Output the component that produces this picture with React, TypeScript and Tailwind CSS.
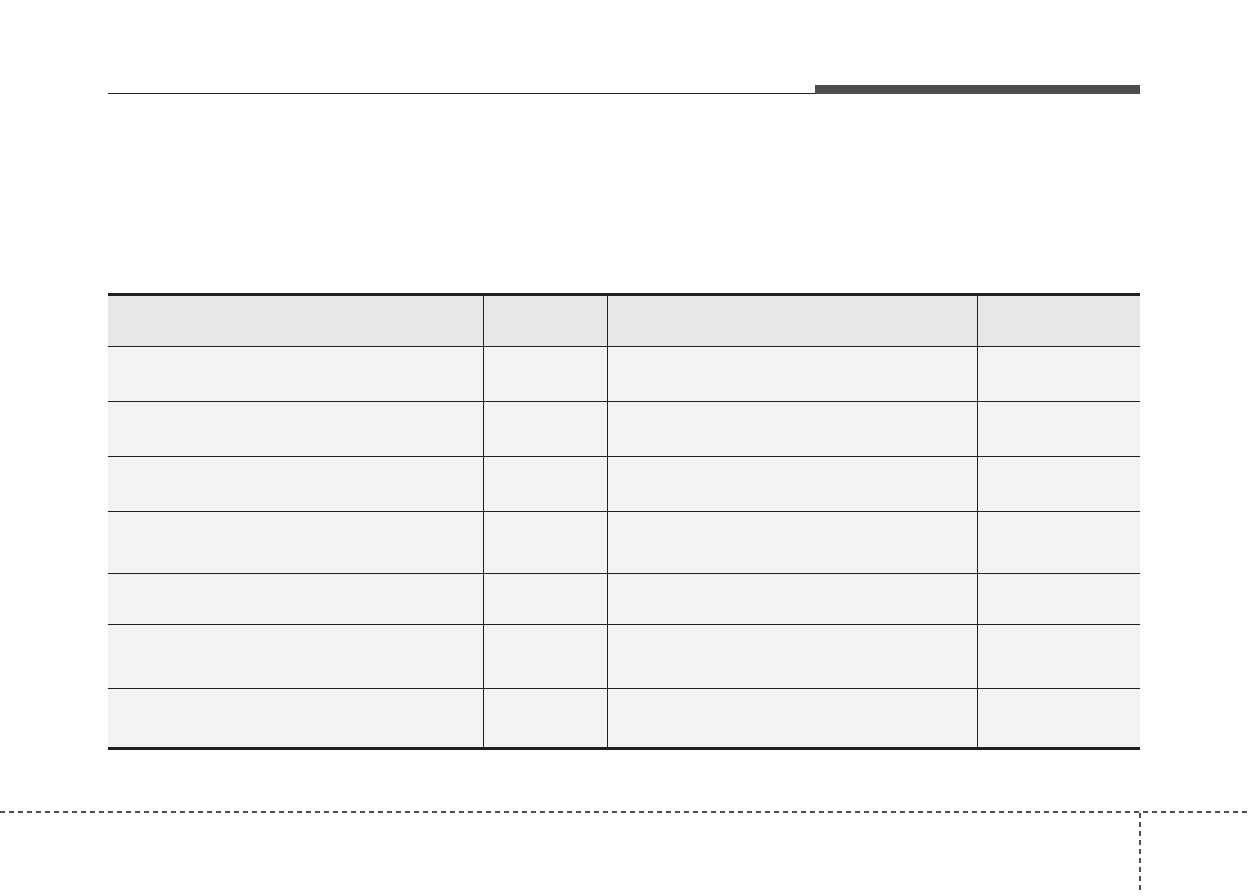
import React from "react"

// Row heights (content only, border counted separately)
const rows = [54, 54, 54, 61, 50, 63, 58]

const cols = "grid grid-cols-[376px_124px_370px_162px]"

function Row({ height, header, last }: { height: number; header?: boolean; last?: boolean }) {
  const bg = header ? "bg-[#e7e7e7]" : "bg-[#f3f3f3]"
  return (
    <div
      className={`${cols} ${bg} ${last ? "" : "border-b border-[#231f20]"}`}
      style={{ height: last ? height : height + 1 }}
    >
      <div className="border-r border-[#231f20]" />
      <div className="border-r border-[#231f20]" />
      <div className="border-r border-[#231f20]" />
      <div />
    </div>
  )
}

export default function App() {
  return (
    <div className="w-[1248px] h-[896px] bg-white overflow-hidden font-['Liberation_Sans',sans-serif]">
      <div className="px-[108px] pt-[85px]">
        {/* top rule with dark tab */}
        <div className="flex items-end">
          <div className="flex-1 h-px bg-[#231f20]" />
          <div className="w-[325px] h-[9px] bg-[#4d4d4d]" />
        </div>

        {/* table */}
        <div className="mt-[199px] border-t-[3px] border-b-[3px] border-[#231f20]">
          <Row height={50} header />
          {rows.map((h, i) => (
            <Row key={i} height={h} last={i === rows.length - 1} />
          ))}
        </div>
      </div>

      {/* crop marks */}
      <div className="mt-[61px]">
        <div className="h-[2px] w-full bg-[repeating-linear-gradient(90deg,#4d4d4d_0_5px,transparent_5px_9px)]" />
        <div className="ml-[1139px] w-[2px] h-[80px] bg-[repeating-linear-gradient(180deg,#4d4d4d_0_5px,transparent_5px_9px)]" />
      </div>
    </div>
  )
}
